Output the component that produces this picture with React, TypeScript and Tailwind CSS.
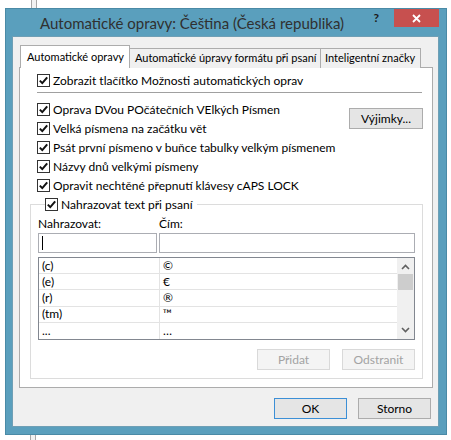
import React from "react";

const font = { fontFamily: 'Lato, "Noto Sans", sans-serif' };

const options = [
  "Oprava DVou POčátečních VElkých Písmen",
  "Velká písmena na začátku vět",
  "Psát první písmeno v buňce tabulky velkým písmenem",
  "Názvy dnů velkými písmeny",
  "Opravit nechtěné přepnutí klávesy cAPS LOCK",
];

const entries = [
  { from: "(c)", to: "©" },
  { from: "(e)", to: "€" },
  { from: "(r)", to: "®" },
  { from: "(tm)", to: "™" },
  { from: "...", to: "…" },
];

function Check({ label }: { label: string }) {
  return (
    <div className="flex items-center h-[19px] gap-[3px]">
      <span className="w-[13px] h-[13px] border border-[#333] bg-white flex items-center justify-center shrink-0">
        <svg width="11" height="11" viewBox="0 0 11 11">
          <path d="M1.8 5.6 L4.3 8.1 L9.2 2.4" fill="none" stroke="#111" strokeWidth="2" />
        </svg>
      </span>
      <span className="whitespace-nowrap">{label}</span>
    </div>
  );
}

function Btn({ label, disabled, primary, w = "w-[73px]" }: { label: string; disabled?: boolean; primary?: boolean; w?: string }) {
  return (
    <button
      className={`${w} h-[21px] flex items-center justify-center border ${
        disabled
          ? "bg-[#f4f4f4] border-[#d9d9d9] text-[#a3a3a3]"
          : primary
          ? "bg-[#e5e5e5] border-[#3c8fd6] text-black"
          : "bg-[#e5e5e5] border-[#acacac] text-black"
      }`}
    >
      {label}
    </button>
  );
}

export default function App() {
  return (
    <div className="w-[451px] h-[440px] bg-white text-[12px] text-black overflow-hidden flex flex-col" style={font}>
      {/* window behind the dialog */}
      <div className="h-[8px] pl-[31px]">
        <div className="w-[6px] h-full border-x border-[#a8a8a8] bg-[#f2f2f2]" />
      </div>

      <div className="ml-[5px] w-[442px] h-[427px] bg-[#5a9fbd] border border-[#4a8aa6] flex flex-col">
        {/* title bar */}
        <div className="h-[27px] flex items-start">
          <div className="pl-[34px] pt-[4px] text-[15px] text-[#303030] leading-[20px] whitespace-nowrap">
            Automatické opravy: Čeština (Česká republika)
          </div>
          <div className="ml-auto flex items-start">
            <span className="mt-[2px] mr-[15px] text-[#1a1a1a] font-bold text-[12px] leading-[14px]">?</span>
            <div className="w-[45px] h-[18px] bg-[#c7504f] flex items-center justify-center mr-[7px]">
              <svg width="9" height="9" viewBox="0 0 9 9">
                <path d="M1 1 L8 8 M8 1 L1 8" stroke="#fff" strokeWidth="1.8" />
              </svg>
            </div>
          </div>
        </div>

        {/* client area */}
        <div className="ml-[6px] w-[427px] h-[391px] bg-[#f0f0f0] border border-[#6f9fb5] pt-[8px] pl-[6px]">
          {/* tabs */}
          <div className="flex items-end h-[23px] pl-[1px] relative z-10 text-[11px]">
            <div className="h-[23px] pl-[6px] w-[110px] bg-white border border-b-0 border-[#acacac] flex items-center -mr-[1px] whitespace-nowrap">
              Automatické opravy
            </div>
            <div className="h-[20px] w-[192px] bg-[#f0f0f0] border border-b-0 border-[#acacac] flex items-center pl-[5px] whitespace-nowrap">
              Automatické úpravy formátu při psaní
            </div>
            <div className="h-[20px] w-[100px] bg-[#f0f0f0] border border-b-0 border-l-0 border-[#acacac] flex items-center pl-[4px] whitespace-nowrap">
              Inteligentní značky
            </div>
          </div>

          {/* tab page */}
          <div className="-mt-[1px] w-[414px] h-[321px] bg-white border border-[#acacac] pt-[3px] pl-[10px]">
            <div className="pl-[7px]">
              <Check label="Zobrazit tlačítko Možnosti automatických oprav" />
            </div>
            <div className="ml-[7px] mt-[2px] w-[385px] h-px bg-[#a0a0a0]" />

            <div className="mt-[7px] flex">
              <div className="pl-[7px] flex flex-col">
                {options.map((o) => (
                  <Check key={o} label={o} />
                ))}
              </div>
              <div className="ml-auto mr-[9px] mt-[8px]">
                <Btn label="Výjimky..." w="w-[74px]" />
              </div>
            </div>

            {/* replace group */}
            <fieldset className="w-[393px] border border-[#dcdcdc] px-[7px] pb-[8px]">
              <legend className="ml-[7px] pr-[4px] bg-white">
                <Check label="Nahrazovat text při psaní" />
              </legend>
              <div className="flex h-[19px] items-center">
                <span className="w-[121px]">Nahrazovat:</span>
                <span>Čím:</span>
              </div>
              <div className="flex gap-[2px] h-[20px]">
                <div className="w-[119px] border border-[#abadb3] bg-white flex items-center pl-[3px]">
                  <span className="w-px h-[14px] bg-black" />
                </div>
                <div className="flex-1 border border-[#abadb3] bg-white" />
              </div>

              <div className="mt-[4px] h-[83px] border border-[#828790] bg-white flex">
                <div className="flex-1 flex flex-col">
                  {entries.map((e, i) => (
                    <div
                      key={e.from}
                      className={`flex h-[16.2px] items-center ${i < entries.length - 1 ? "border-b border-[#e3e3e3]" : ""}`}
                    >
                      <span className="w-[121px] h-full pl-[3px] border-r border-[#e3e3e3] flex items-center">
                        {e.from}
                      </span>
                      <span className="pl-[3px]">{e.to}</span>
                    </div>
                  ))}
                </div>
                <div className="w-[17px] bg-[#f0f0f0] flex flex-col items-center">
                  <svg className="mt-[6px]" width="9" height="6" viewBox="0 0 9 6">
                    <path d="M1 5 L4.5 1.5 L8 5" fill="none" stroke="#606060" strokeWidth="1.6" />
                  </svg>
                  <div className="mt-[4px] w-[15px] h-[16px] bg-[#cdcdcd]" />
                  <svg className="mt-auto mb-[6px]" width="9" height="6" viewBox="0 0 9 6">
                    <path d="M1 1 L4.5 4.5 L8 1" fill="none" stroke="#606060" strokeWidth="1.6" />
                  </svg>
                </div>
              </div>

              <div className="mt-[9px] flex justify-end gap-[12px]">
                <Btn label="Přidat" disabled />
                <Btn label="Odstranit" disabled />
              </div>
            </fieldset>
          </div>

          {/* dialog buttons */}
          <div className="mt-[10px] flex justify-end gap-[11px] pr-[7px]">
            <Btn label="OK" primary />
            <Btn label="Storno" />
          </div>
        </div>
      </div>

      <div className="h-[5px] pl-[30px]">
        <div className="w-[6px] h-full border-x border-[#a8a8a8] bg-[#f2f2f2]" />
      </div>
    </div>
  );
}
